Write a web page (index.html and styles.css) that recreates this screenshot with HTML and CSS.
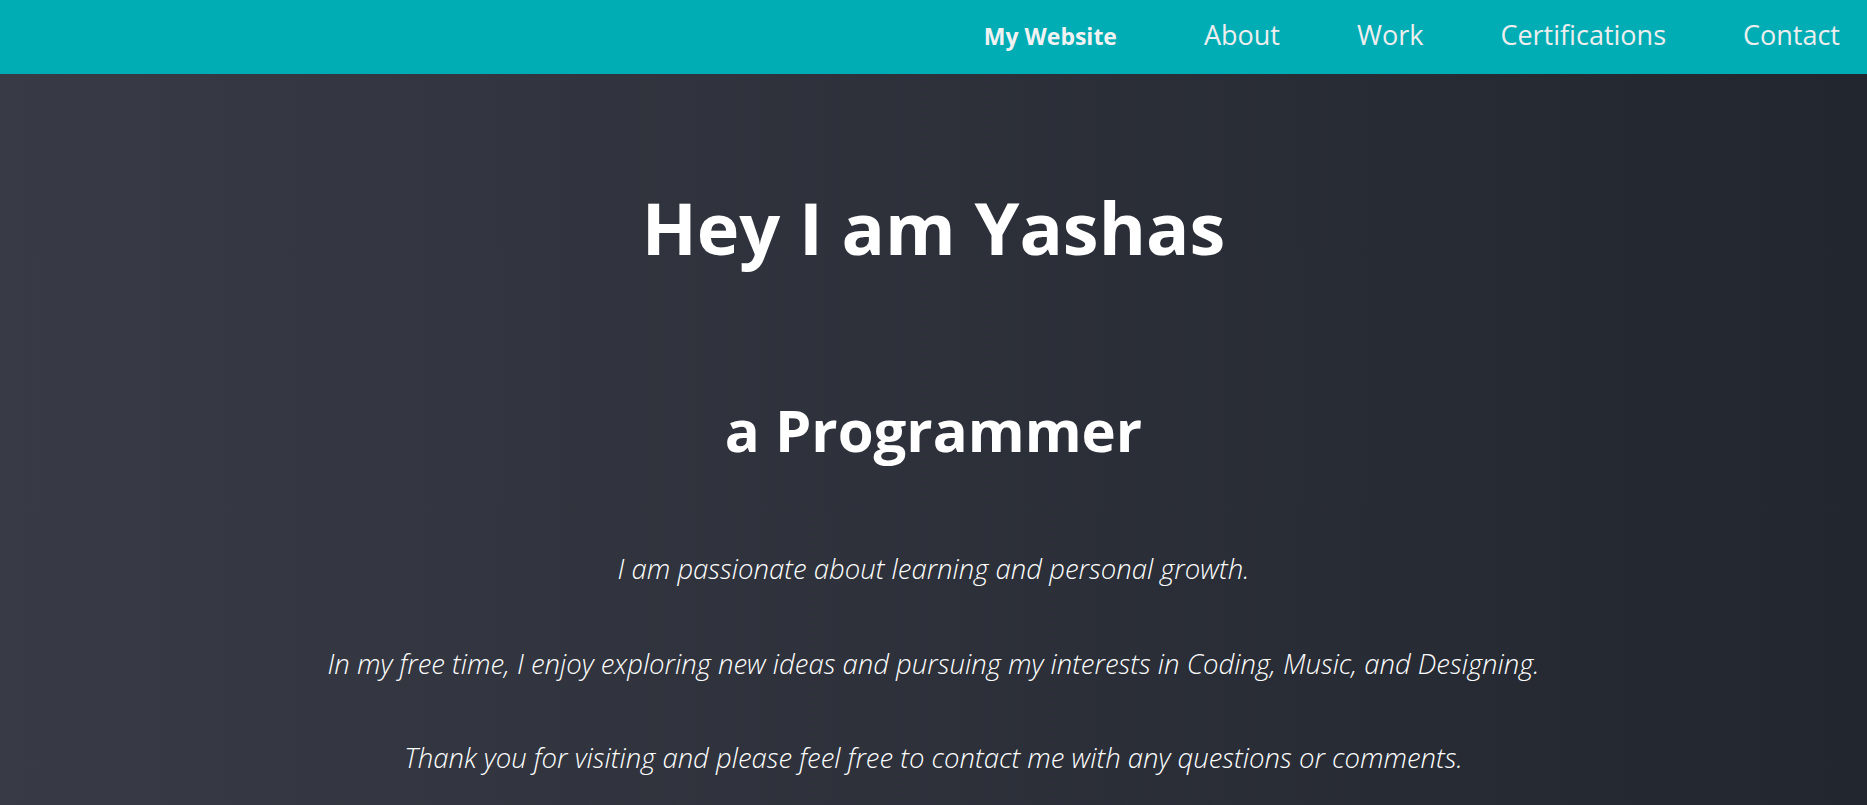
FILE: index.html
```html
<!DOCTYPE html>
<html lang="en">
<head>
<meta charset="utf-8">
<title>My Website</title>
<link rel="stylesheet" href="styles.css">
</head>
<body>
<header class="navbar">
  <a class="brand" href="#">My Website</a>
  <nav class="nav-links">
    <a href="#">About</a>
    <a href="#">Work</a>
    <a href="#">Certifications</a>
    <a href="#">Contact</a>
  </nav>
</header>
<main class="hero">
  <h1 class="hero-title">Hey I am Yashas</h1>
  <h2 class="hero-subtitle">a Programmer</h2>
  <p class="hero-text">I am passionate about learning and personal growth.</p>
  <p class="hero-text">In my free time, I enjoy exploring new ideas and pursuing my interests in Coding, Music, and Designing.</p>
  <p class="hero-text">Thank you for visiting and please feel free to contact me with any questions or comments.</p>
</main>
</body>
</html>
```
FILE: styles.css
```css
* { box-sizing: border-box; }

html, body {
  margin: 0;
  padding: 0;
}

body {
  min-height: 100vh;
  font-family: "Open Sans", "Noto Sans", sans-serif;
  color: #ffffff;
  background: linear-gradient(to right, #383b45, #22262f);
  overflow: hidden;
}

.navbar {
  height: 74px;
  background: #00adb5;
  display: flex;
  align-items: center;
  justify-content: flex-end;
  padding: 0 27px 6px 0;
}

.brand {
  color: #f2f2f2;
  text-decoration: none;
  font-weight: 700;
  font-size: 23px;
  margin-right: 87px;
  padding-top: 3px;
}

.nav-links {
  display: flex;
  gap: 77px;
}

.nav-links a {
  color: #eeeeee;
  text-decoration: none;
  font-size: 27px;
  font-weight: 400;
}

.hero {
  display: flex;
  flex-direction: column;
  align-items: center;
  text-align: center;
  padding-top: 117px;
}

.hero-title {
  margin: 0;
  font-size: 72px;
  line-height: 1;
  font-weight: 700;
}

.hero-subtitle {
  margin: 138px 0 0;
  font-size: 58px;
  line-height: 1;
  font-weight: 700;
}

.hero-text {
  margin: 67px 0 0;
  font-size: 27.5px;
  line-height: 1;
  font-weight: 300;
  font-style: italic;
}

.hero-subtitle + .hero-text {
  margin-top: 96px;
}
```
